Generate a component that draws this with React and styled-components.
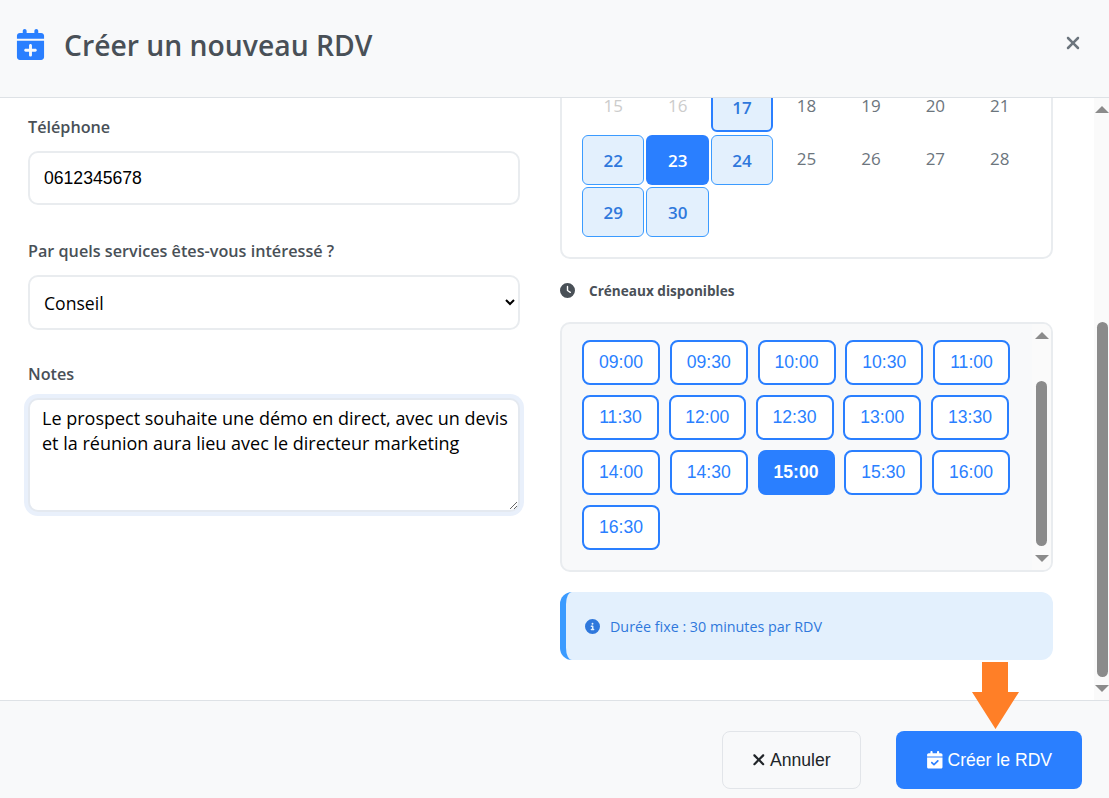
import React, { useLayoutEffect, useRef } from 'react';
import styled, { createGlobalStyle } from 'styled-components';
import {
  FaCalendarPlus,
  FaXmark,
  FaClock,
  FaCircleInfo,
  FaCalendarCheck,
} from 'react-icons/fa6';

const uiFont = `"Open Sans", "Noto Sans", sans-serif`;
const arial = `"Liberation Sans", Arial, sans-serif`;

const GlobalStyle = createGlobalStyle`
  html, body {
    margin: 0;
    height: 100%;
    overflow: hidden;
    background: #fff;
    font-family: ${uiFont};
  }
  * { box-sizing: border-box; }
`;

const Modal = styled.div`
  position: relative;
  display: flex;
  flex-direction: column;
  height: 100vh;
  background: #fff;
`;

const Header = styled.header`
  flex: 0 0 98px;
  display: flex;
  align-items: center;
  justify-content: space-between;
  padding: 0 26px 8px 15px;
  background: #f8f9fa;
  border-bottom: 1px solid #dee2e6;
`;

const Title = styled.h1`
  display: flex;
  align-items: center;
  gap: 18px;
  margin: 0;
  font-size: 28.3px;
  font-weight: 600;
  color: #495057;
  svg { font-size: 31px; color: #2a7fff; }
`;

const CloseButton = styled.button`
  display: flex;
  margin-bottom: 4px;
  padding: 0;
  border: 0;
  background: none;
  color: #6c757d;
  font-size: 20px;
`;

const BodyWrap = styled.div`
  position: relative;
  flex: 1;
  min-height: 0;
`;

const ScrollBody = styled.main`
  height: 100%;
  overflow-y: auto;
  scrollbar-width: none;
`;

const Rail = styled.div`
  position: absolute;
  top: 0;
  right: 0;
  bottom: 0;
  width: ${(p) => p.$width}px;
  background: #fafafa;
`;

const RailArrow = styled.span`
  position: absolute;
  left: 50%;
  ${(p) => (p.$up ? 'top' : 'bottom')}: ${(p) => p.$inset}px;
  margin-left: -7px;
  border-left: 7px solid transparent;
  border-right: 7px solid transparent;
  border-${(p) => (p.$up ? 'bottom' : 'top')}: 7px solid #8b8b8b;
`;

const RailThumb = styled.span`
  position: absolute;
  top: ${(p) => p.$top}px;
  left: ${(p) => p.$left}px;
  width: 11px;
  height: ${(p) => p.$height}px;
  border-radius: 6px;
  background: #8b8b8b;
`;

const Columns = styled.div`
  display: grid;
  grid-template-columns: 492px 493px;
  column-gap: 40px;
  padding: 24px 0 50px 28px;
`;

const LeftColumn = styled.section`
  padding-top: 344px;
`;

const RightColumn = styled.section``;

const Field = styled.div`
  margin-bottom: ${(p) => p.$gap || 0}px;
`;

const Label = styled.label`
  display: block;
  height: 24px;
  margin-bottom: 12px;
  font-size: 16.2px;
  line-height: 24px;
  font-weight: 600;
  color: #495057;
`;

const TextInput = styled.input`
  display: block;
  width: 100%;
  height: 54px;
  padding: 0 14px;
  border: 2px solid #e9ecef;
  border-radius: 10px;
  background: #fff;
  color: #000;
  font-family: ${arial};
  font-size: 17.6px;
  outline: none;
`;

const Select = styled.select`
  display: block;
  width: 100%;
  height: 55px;
  padding: 0 10px;
  border: 2px solid #e9ecef;
  border-radius: 10px;
  background: #fff;
  color: #000;
  font-family: ${uiFont};
  font-size: 17.6px;
  outline: none;
`;

const Notes = styled.textarea`
  display: block;
  width: 100%;
  height: 114px;
  padding: 6px 12px;
  border: 2px solid #e4e9f0;
  border-radius: 10px;
  background: #fff;
  box-shadow: 0 0 0 4px #e9f0fb;
  color: #000;
  font-family: ${uiFont};
  font-size: 18px;
  line-height: 25px;
  white-space: pre;
  overflow: hidden;
  outline: none;
`;

const CalendarCard = styled.div`
  padding: 309px 20px 20px;
  border: 2px solid #e9ecef;
  border-radius: 10px;
  background: #fff;
`;

const DaysGrid = styled.div`
  display: grid;
  grid-template-columns: repeat(7, 1fr);
  grid-template-rows: 51px 50px 50px;
  gap: 2px;
`;

const Day = styled.div`
  display: flex;
  align-items: center;
  justify-content: center;
  align-self: start;
  height: 47px;
  border-radius: 6px;
  font-size: 17px;
  color: ${(p) => (p.$disabled ? '#ccc' : '#6c757d')};
`;

const AvailableDay = styled(Day)`
  height: 50px;
  border: ${(p) => (p.$today ? 2 : 1)}px solid ${(p) => (p.$today ? '#2a7fff' : '#3b9bff')};
  background: #e3f0fd;
  color: #2f78dc;
  font-weight: 600;
`;

const SelectedDay = styled(Day)`
  height: 50px;
  background: #2a7fff;
  color: #fff;
  font-weight: 600;
`;

const SlotsTitle = styled.h3`
  display: flex;
  align-items: center;
  gap: 14px;
  height: 20px;
  margin: 21px 0 22px;
  font-size: 13.6px;
  font-weight: 700;
  color: #495057;
  svg { font-size: 15px; }
`;

const SlotsPanel = styled.div`
  position: relative;
  height: 250px;
  border: 2px solid #e9ecef;
  border-radius: 10px;
  background: #f8f9fa;
  overflow: hidden;
`;

const SlotsScroll = styled.div`
  height: 100%;
  overflow-y: auto;
  scrollbar-width: none;
`;

const SlotsList = styled.div`
  display: flex;
  flex-wrap: wrap;
  align-content: flex-start;
  gap: 10px 9.75px;
  padding: 78px 39px 33px 20px;
`;

const Slot = styled.button`
  width: ${(p) => (p.$narrow ? 77 : 78)}px;
  height: 45px;
  padding: 0;
  border: 2px solid #2a7fff;
  border-radius: 8px;
  background: ${(p) => (p.$active ? '#2a7fff' : '#fff')};
  color: ${(p) => (p.$active ? '#fff' : '#2a7fff')};
  font-family: ${arial};
  font-size: 17.6px;
  font-weight: ${(p) => (p.$active ? 700 : 400)};
`;

const InfoBox = styled.div`
  display: flex;
  align-items: center;
  gap: 10px;
  height: 68px;
  margin-top: 20px;
  padding: 1px 0 0 19px;
  border-left: 6px solid #3b9bff;
  border-radius: 12px;
  background: #e3f0fd;
  color: #2f78dc;
  font-size: 14.3px;
  font-weight: 500;
  svg { font-size: 15px; }
`;

const Footer = styled.footer`
  flex: 0 0 98px;
  display: flex;
  justify-content: flex-end;
  gap: 35px;
  padding: 30px 27px 9px 0;
  background: #f8f9fa;
  border-top: 1px solid #dee2e6;
`;

const FooterButton = styled.button`
  display: flex;
  align-items: center;
  justify-content: center;
  height: 58px;
  border-radius: 8px;
  font-family: ${arial};
  font-size: 17.6px;
`;

const CancelButton = styled(FooterButton)`
  gap: 2px;
  width: 139px;
  padding: 0 2px 0 0;
  border: 1px solid #e2e5e9;
  background: #f8f9fa;
  color: #212529;
`;

const SubmitButton = styled(FooterButton)`
  gap: 4px;
  width: 186px;
  border: 0;
  background: #2a7fff;
  color: #fff;
`;

const Arrow = styled.svg`
  position: absolute;
  left: 972px;
  top: 662px;
  width: 47px;
  height: 67px;
`;

const days = [
  { n: 15, disabled: true },
  { n: 16, disabled: true },
  { n: 17, kind: 'available', today: true },
  { n: 18 },
  { n: 19 },
  { n: 20 },
  { n: 21 },
  { n: 22, kind: 'available' },
  { n: 23, kind: 'selected' },
  { n: 24, kind: 'available' },
  { n: 25 },
  { n: 26 },
  { n: 27 },
  { n: 28 },
  { n: 29, kind: 'available' },
  { n: 30, kind: 'available' },
];

const slots = [
  '09:00', '09:30', '10:00', '10:30', '11:00',
  '11:30', '12:00', '12:30', '13:00', '13:30',
  '14:00', '14:30', '15:00', '15:30', '16:00',
  '16:30',
];

const narrowSlots = ['11:00', '11:30', '12:00', '15:00'];

const Scrollbar = ({ width, thumbLeft, thumbTop, thumbHeight, arrowInset }) => (
  <Rail $width={width}>
    <RailArrow $up $inset={arrowInset} />
    <RailThumb $left={thumbLeft} $top={thumbTop} $height={thumbHeight} />
    <RailArrow $inset={arrowInset} />
  </Rail>
);

const App = () => {
  const bodyRef = useRef(null);
  const slotsRef = useRef(null);

  // the picture shows both panes already scrolled
  useLayoutEffect(() => {
    bodyRef.current.scrollTop = 351;
    slotsRef.current.scrollTop = 62;
  }, []);

  return (
    <Modal>
      <GlobalStyle />
      <Header>
        <Title>
          <FaCalendarPlus />
          Créer un nouveau RDV
        </Title>
        <CloseButton aria-label="Fermer">
          <FaXmark />
        </CloseButton>
      </Header>

      <BodyWrap>
        <ScrollBody ref={bodyRef}>
          <Columns>
            <LeftColumn>
              <Field $gap={34}>
                <Label>Téléphone</Label>
                <TextInput defaultValue="0612345678" />
              </Field>
              <Field $gap={32}>
                <Label>Par quels services êtes-vous intéressé ?</Label>
                <Select defaultValue="Conseil">
                  <option>Conseil</option>
                </Select>
              </Field>
              <Field>
                <Label>Notes</Label>
                <Notes
                  defaultValue={'Le prospect souhaite une démo en direct, avec un devis\net la réunion aura lieu avec le directeur marketing'}
                />
              </Field>
            </LeftColumn>

            <RightColumn>
              <CalendarCard>
                <DaysGrid>
                  {days.map((day) => {
                    if (day.kind === 'selected') return <SelectedDay key={day.n}>{day.n}</SelectedDay>;
                    if (day.kind === 'available') {
                      return <AvailableDay key={day.n} $today={day.today}>{day.n}</AvailableDay>;
                    }
                    return <Day key={day.n} $disabled={day.disabled}>{day.n}</Day>;
                  })}
                </DaysGrid>
              </CalendarCard>

              <SlotsTitle>
                <FaClock />
                Créneaux disponibles
              </SlotsTitle>

              <SlotsPanel>
                <SlotsScroll ref={slotsRef}>
                  <SlotsList>
                    {slots.map((slot) => (
                      <Slot key={slot} $active={slot === '15:00'} $narrow={narrowSlots.includes(slot)}>
                        {slot}
                      </Slot>
                    ))}
                  </SlotsList>
                </SlotsScroll>
                <Scrollbar width={19} thumbLeft={4} thumbTop={57} thumbHeight={165} arrowInset={8} />
              </SlotsPanel>

              <InfoBox>
                <FaCircleInfo />
                Durée fixe : 30 minutes par RDV
              </InfoBox>
            </RightColumn>
          </Columns>
        </ScrollBody>
        <Scrollbar width={15} thumbLeft={3} thumbTop={224} thumbHeight={355} arrowInset={8} />
      </BodyWrap>

      <Footer>
        <CancelButton>
          <FaXmark />
          Annuler
        </CancelButton>
        <SubmitButton>
          <FaCalendarCheck />
          Créer le RDV
        </SubmitButton>
      </Footer>

      <Arrow viewBox="0 0 47 67">
        <path d="M10 0H36V30H47L23.5 67L0 30H10Z" fill="#ff7f27" />
      </Arrow>
    </Modal>
  );
};

export default App;
